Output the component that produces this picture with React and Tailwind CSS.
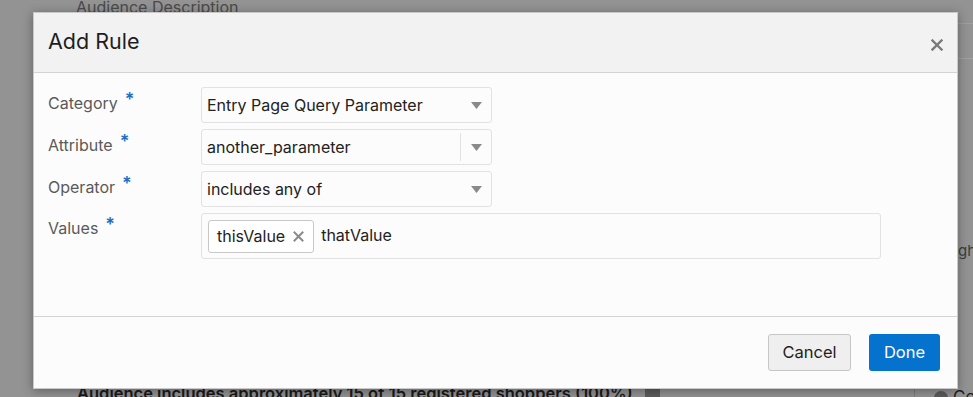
import React from "react";

function Caret() {
  return (
    <svg width="11" height="7" viewBox="0 0 11 7" className="shrink-0">
      <path d="M0 0 L11 0 L5.5 7 Z" fill="#8a8a8a" />
    </svg>
  );
}

function Label({ text, pt }) {
  return (
    <div className={`flex items-start text-[16px] leading-[20px] text-[#5a5a5a] ${pt}`}>
      <span>{text}</span>
      <span className="ml-[7px] text-[18px] font-semibold leading-[14px] text-[#1c6fc2]">*</span>
    </div>
  );
}

function SelectBox({ value, divider }) {
  return (
    <div className="flex h-[36px] w-[291px] items-center rounded-[3px] border border-[#e2e2e2] bg-[#fcfcfc] pl-[5px]">
      <span className="flex-1 text-[16px] text-[#222]">{value}</span>
      {divider ? <div className="h-[28px] w-px bg-[#e2e2e2]" /> : null}
      <div className="flex w-[30px] justify-center">
        <Caret />
      </div>
    </div>
  );
}

export default function App() {
  return (
    <div className="relative h-[397px] w-[973px] overflow-hidden bg-[#939393] font-['Inter','Liberation_Sans',sans-serif]">
      {/* background page */}
      <div className="flex h-full flex-col">
        <div className="-mt-[5px] pl-[76px] text-[16px] text-[#4a4a4a]">Audience Description</div>
        <div className="flex-1" />
        <div className="-mb-[9px] flex items-center gap-[12px] pl-[77px]">
          <span className="text-[16.5px] font-semibold text-[#1a1a1a]">
            Audience includes approximately 15 of 15 registered shoppers (100%)
          </span>
          <span className="h-[14px] w-[15px] rounded-[2px] bg-[#5d5d5d]" />
        </div>
      </div>
      <div className="absolute left-[958px] top-[240px] text-[15px] text-[#3c3c3c]">gh</div>
      <div className="absolute left-[914px] top-[386px] h-[11px] w-px bg-[#7d7d7d]" />
      <div className="absolute left-[934px] top-[385px] flex items-center gap-[5px]">
        <span className="h-[14px] w-[14px] rounded-full bg-[#5b5b5b]" />
        <span className="text-[17px] text-[#1f1f1f]">Co</span>
      </div>
      <div className="absolute left-[958px] top-[23px] h-px w-[15px] bg-[#a0a0a0]" />
      <div className="absolute left-[958px] top-[58px] h-px w-[15px] bg-[#a0a0a0]" />

      {/* dialog */}
      <div className="absolute left-[33px] top-[12px] flex h-[377px] w-[925px] flex-col border border-[#c9c9c9] bg-[#fcfcfc] shadow-[0_2px_10px_rgba(0,0,0,0.35)]">
        <div className="flex h-[60px] items-center justify-between border-b border-[#d4d4d4] bg-[#f2f2f2] pl-[14px] pr-[14px]">
          <span className="-mt-[3px] text-[21.5px] text-[#1e1e1e]">Add Rule</span>
          <svg width="12" height="12" viewBox="0 0 12 12" className="mt-[5px]">
            <path d="M1.5 1.5 L10.5 10.5 M10.5 1.5 L1.5 10.5" stroke="#7a7a7a" strokeWidth="2.4" strokeLinecap="square" />
          </svg>
        </div>

        <div className="flex flex-1 flex-col gap-[6px] pl-[14px] pt-[14px]">
          <div className="flex">
            <div className="w-[153px]"><Label text="Category" pt="pt-[6px]" /></div>
            <SelectBox value="Entry Page Query Parameter" />
          </div>
          <div className="flex">
            <div className="w-[153px]"><Label text="Attribute" pt="pt-[6px]" /></div>
            <SelectBox value="another_parameter" divider />
          </div>
          <div className="flex">
            <div className="w-[153px]"><Label text="Operator" pt="pt-[6px]" /></div>
            <SelectBox value="includes any of" />
          </div>
          <div className="flex">
            <div className="w-[153px]"><Label text="Values" pt="pt-[5px]" /></div>
            <div className="flex h-[46px] w-[680px] items-center gap-[7px] rounded-[3px] border border-[#e2e2e2] bg-[#fcfcfc] pl-[6px]">
              <div className="flex h-[33px] items-center gap-[8px] rounded-[3px] border border-[#c8c8c8] bg-white pl-[8px] pr-[9px]">
                <span className="text-[16px] text-[#222]">thisValue</span>
                <svg width="11" height="11" viewBox="0 0 11 11">
                  <path d="M1.5 1.5 L9.5 9.5 M9.5 1.5 L1.5 9.5" stroke="#8a8a8a" strokeWidth="2" strokeLinecap="square" />
                </svg>
              </div>
              <span className="-mt-[2px] text-[16px] text-[#222]">thatValue</span>
            </div>
          </div>
        </div>

        <div className="flex h-[72px] items-center justify-end gap-[18px] border-t border-[#d4d4d4] pr-[17px]">
          <button className="h-[37px] w-[83px] rounded-[3px] border border-[#c6c6c6] bg-[#efefef] text-[16.5px] text-[#1e1e1e]">
            Cancel
          </button>
          <button className="h-[37px] w-[71px] rounded-[3px] bg-[#0572ce] text-[16.5px] text-white">
            Done
          </button>
        </div>
      </div>
    </div>
  );
}
